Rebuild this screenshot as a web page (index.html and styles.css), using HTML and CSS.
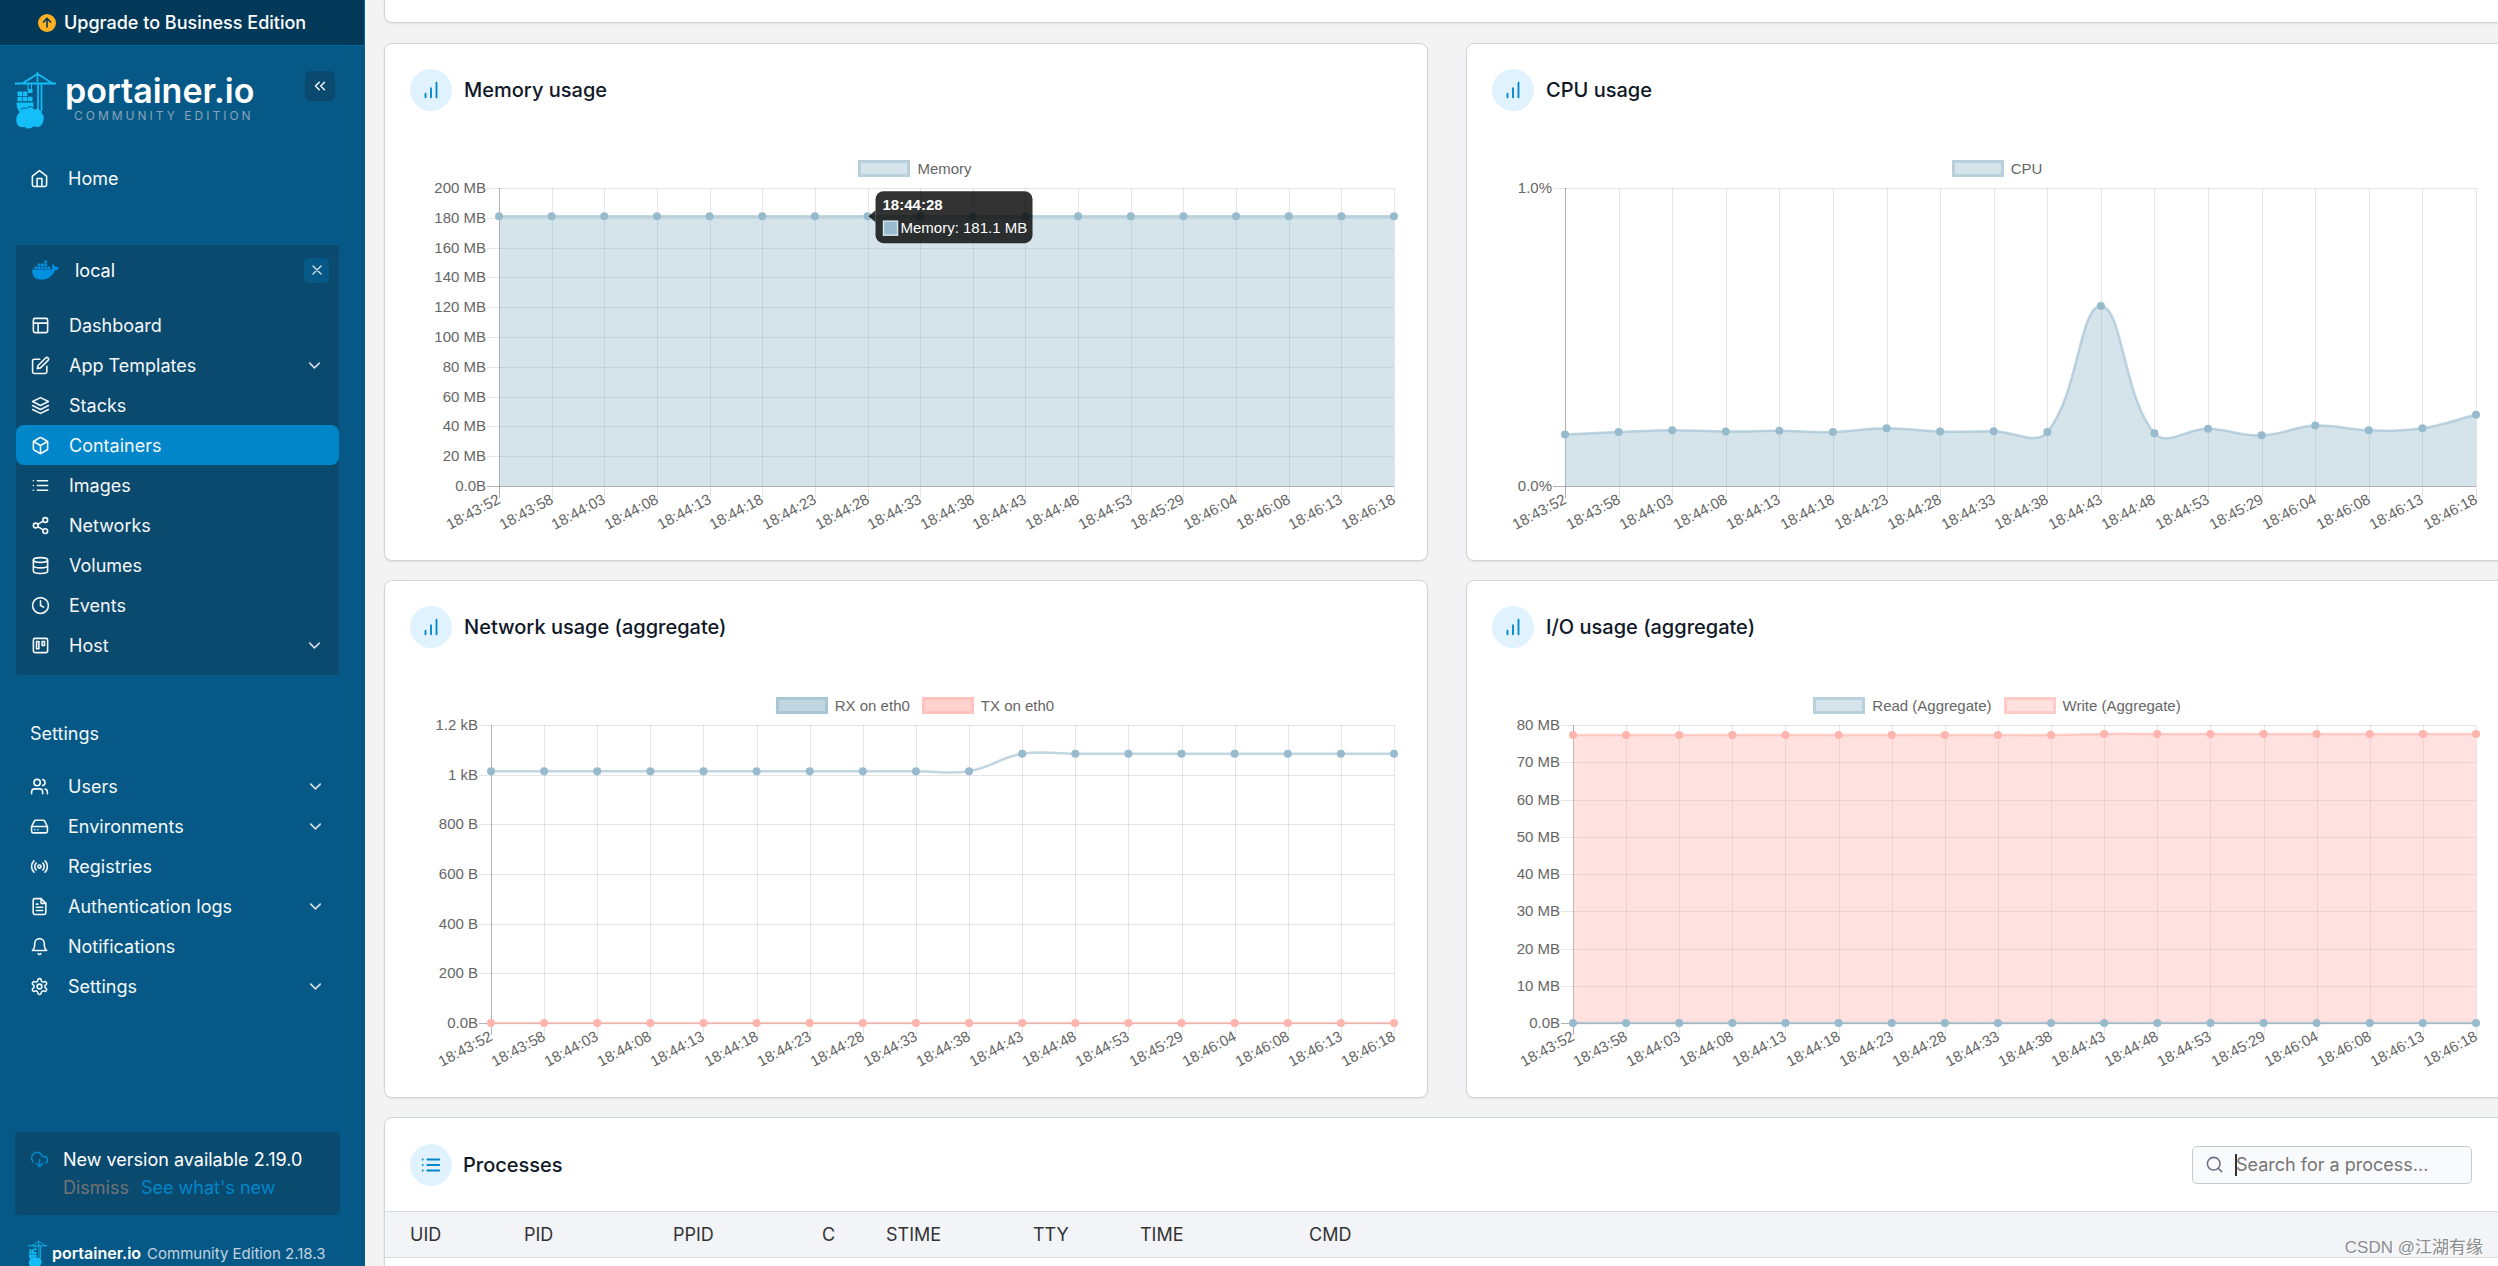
FILE: index.html
```html
<!DOCTYPE html>
<html lang="en">
<head>
<meta charset="utf-8">
<title>Portainer | Container statistics</title>
<meta name="viewport" content="width=device-width, initial-scale=1">
<link rel="stylesheet" href="styles.css">
<script src="charts.js" defer></script>
</head>
<body>
<svg class="sprite" aria-hidden="true">
  <symbol id="crane" viewBox="0 0 42 60">
    <g fill="none" stroke="#13bef9">
      <path d="M22.500 1v10.500M8 12 22.500 3 37 12" stroke-width="1.600"/>
      <path d="M0 12.500h41" stroke-width="2"/>
      <path d="M23 12v28M26.500 12v28" stroke-width="1.700"/>
      <path d="M13 12v7M16.500 12v7" stroke-width="1"/>
    </g>
    <g fill="#13bef9">
      <path d="M13 18h4.500v4H13zM2.500 20.500h4.500v4.500H2.500zM7.800 20.500h4.500v4.500H7.800zM2.500 25.800h4.500v4.500H2.500zM7.800 25.800h4.500v4.500H7.800zM13 25.800h4.500v4.500H13z"/>
      <path d="M1.500 31.500h17v8l-12 3c-3-2-5-6-5-11z"/>
      <path d="M6.500 39.500c2-1.500 4-1 5-.500 1.500-2 5-2.500 7-.500 4-1.500 8 0 8.500 4 2 2 2.500 5 1 8-.500 3.500-3 5.500-6.500 5.500-1 0-2-.200-3-.700-2 2.500-6 3.200-8.500.700-5 .800-8.500-1.500-8.500-5.500-1-4 1.500-8.500 5-11z"/>
    </g>
    <path d="M6 38.500c2-2 4.500-1.500 5.500-1 1.500-2 5-2.500 7-.500" fill="none" stroke="#065986" stroke-width="1"/>
  </symbol>
  <symbol id="chevron" viewBox="0 0 24 24"><path d="m6 9 6 6 6-6"/></symbol>
  <symbol id="bars" viewBox="0 0 24 24"><path d="M6 20v-4M12 20V10M18 20V4"/></symbol>
  <symbol id="list" viewBox="0 0 24 24"><path d="M8 6h13M8 12h13M8 18h13M3 6h.01M3 12h.01M3 18h.01"/></symbol>
</svg>

<aside class="sidebar">
  <button class="upgrade" type="button">
    <svg viewBox="0 0 18 18" width="18" height="18" aria-hidden="true"><circle cx="9" cy="9" r="9" fill="#fdb022"/><path d="M9 13.500V5M5 8.500 9 4.500l4 4" fill="none" stroke="#023959" stroke-width="1.600"/></svg>
    Upgrade to Business Edition
  </button>

  <div class="brand">
    <a class="brand-link" href="#home">
      <svg width="42" height="60" aria-hidden="true"><use href="#crane"/></svg>
      <span class="brand-text">
        <span class="wordmark">portainer.io</span>
        <span class="edition">COMMUNITY EDITION</span>
      </span>
    </a>
    <button class="collapse" type="button" aria-label="Collapse sidebar">
      <svg class="icon" viewBox="0 0 24 24"><path d="m11 17-5-5 5-5M18 17l-5-5 5-5"/></svg>
    </button>
  </div>

  <nav class="nav">
    <ul class="menu">
      <li><a class="item" href="#home"><svg class="icon" viewBox="0 0 24 24"><path d="m3 9 9-7 9 7v11a2 2 0 0 1-2 2H5a2 2 0 0 1-2-2z"/><path d="M9 22V12h6v10"/></svg>Home</a></li>
    </ul>

    <section class="environment">
      <header class="env-head">
        <svg class="whale" viewBox="0 3 24 18" aria-hidden="true"><path fill="#0091e2" d="M13.983 11.078h2.119a.186.186 0 00.186-.185V9.006a.186.186 0 00-.186-.186h-2.119a.185.185 0 00-.185.185v1.888c0 .102.083.185.185.185m-2.954-5.43h2.118a.186.186 0 00.186-.186V3.574a.186.186 0 00-.186-.185h-2.118a.185.185 0 00-.185.185v1.888c0 .102.082.185.185.185m0 2.716h2.118a.187.187 0 00.186-.186V6.29a.186.186 0 00-.186-.185h-2.118a.185.185 0 00-.185.185v1.887c0 .102.082.185.185.186m-2.93 0h2.12a.186.186 0 00.184-.186V6.29a.185.185 0 00-.185-.185H8.1a.185.185 0 00-.185.185v1.887c0 .102.083.185.185.186m-2.964 0h2.119a.186.186 0 00.185-.186V6.29a.185.185 0 00-.185-.185H5.136a.186.186 0 00-.186.185v1.887c0 .102.084.185.186.186m5.893 2.715h2.118a.186.186 0 00.186-.185V9.006a.186.186 0 00-.186-.186h-2.118a.185.185 0 00-.185.185v1.888c0 .102.082.185.185.185m-2.93 0h2.12a.185.185 0 00.184-.185V9.006a.185.185 0 00-.184-.186h-2.12a.185.185 0 00-.184.185v1.888c0 .102.083.185.185.185m-2.964 0h2.119a.185.185 0 00.185-.185V9.006a.185.185 0 00-.184-.186h-2.12a.186.186 0 00-.186.186v1.887c0 .102.084.185.186.185m-2.92 0h2.12a.185.185 0 00.184-.185V9.006a.185.185 0 00-.184-.186h-2.12a.185.185 0 00-.184.185v1.888c0 .102.082.185.185.185M23.763 9.89c-.065-.051-.672-.51-1.954-.51-.338.001-.676.03-1.01.087-.248-1.7-1.653-2.53-1.716-2.566l-.344-.199-.226.327c-.284.438-.49.922-.612 1.43-.23.97-.09 1.882.403 2.661-.595.332-1.55.413-1.744.42H.751a.751.751 0 00-.75.748 11.376 11.376 0 00.692 4.062c.545 1.428 1.355 2.48 2.41 3.124 1.18.723 3.1 1.137 5.275 1.137.983.003 1.963-.086 2.93-.266a12.248 12.248 0 003.823-1.389c.98-.567 1.86-1.288 2.61-2.136 1.252-1.418 1.998-2.997 2.553-4.4h.221c1.372 0 2.215-.549 2.68-1.009.309-.293.55-.65.707-1.046l.098-.288Z"/></svg>
        <span class="env-name">local</span>
        <button class="env-close" type="button" aria-label="Close environment"><svg class="icon" viewBox="0 0 24 24"><path d="M18 6 6 18M6 6l12 12"/></svg></button>
      </header>
      <ul class="menu">
        <li><a class="item" href="#dashboard"><svg class="icon" viewBox="0 0 24 24"><rect x="3" y="3" width="18" height="18" rx="2"/><path d="M3 9h18M9 21V9"/></svg>Dashboard</a></li>
        <li><a class="item" href="#templates"><svg class="icon" viewBox="0 0 24 24"><path d="M11 4H4a2 2 0 0 0-2 2v14a2 2 0 0 0 2 2h14a2 2 0 0 0 2-2v-7"/><path d="M18.500 2.500a2.120 2.120 0 0 1 3 3L12 15l-4 1 1-4z"/></svg>App Templates<svg class="icon more"><use href="#chevron"/></svg></a></li>
        <li><a class="item" href="#stacks"><svg class="icon" viewBox="0 0 24 24"><path d="m12 2 10 5-10 5L2 7zM2 17l10 5 10-5M2 12l10 5 10-5"/></svg>Stacks</a></li>
        <li><a class="item active" href="#containers" aria-current="page"><svg class="icon" viewBox="0 0 24 24"><path d="M21 16V8a2 2 0 0 0-1-1.730l-7-4a2 2 0 0 0-2 0l-7 4A2 2 0 0 0 3 8v8a2 2 0 0 0 1 1.730l7 4a2 2 0 0 0 2 0l7-4A2 2 0 0 0 21 16z"/><path d="M3.270 6.960 12 12.010l8.730-5.050M12 22.080V12"/></svg>Containers</a></li>
        <li><a class="item" href="#images"><svg class="icon"><use href="#list"/></svg>Images</a></li>
        <li><a class="item" href="#networks"><svg class="icon" viewBox="0 0 24 24"><circle cx="18" cy="5" r="3"/><circle cx="6" cy="12" r="3"/><circle cx="18" cy="19" r="3"/><path d="m8.600 13.500 6.800 4M15.400 6.500l-6.800 4"/></svg>Networks</a></li>
        <li><a class="item" href="#volumes"><svg class="icon" viewBox="0 0 24 24"><ellipse cx="12" cy="5" rx="9" ry="3"/><path d="M21 12c0 1.660-4 3-9 3s-9-1.340-9-3M3 5v14c0 1.660 4 3 9 3s9-1.340 9-3V5"/></svg>Volumes</a></li>
        <li><a class="item" href="#events"><svg class="icon" viewBox="0 0 24 24"><circle cx="12" cy="12" r="10"/><path d="M12 6v6l4 2"/></svg>Events</a></li>
        <li><a class="item" href="#host"><svg class="icon" viewBox="0 0 24 24"><rect x="3" y="3" width="18" height="18" rx="2"/><path d="M7 7h3v9H7zM14 7h3v5h-3z"/></svg>Host<svg class="icon more"><use href="#chevron"/></svg></a></li>
      </ul>
    </section>

    <h2 class="nav-title">Settings</h2>
    <ul class="menu">
      <li><a class="item" href="#users"><svg class="icon" viewBox="0 0 24 24"><path d="M16 21v-2a4 4 0 0 0-4-4H6a4 4 0 0 0-4 4v2"/><circle cx="9" cy="7" r="4"/><path d="M22 21v-2a4 4 0 0 0-3-3.870M16 3.130a4 4 0 0 1 0 7.750"/></svg>Users<svg class="icon more"><use href="#chevron"/></svg></a></li>
      <li><a class="item" href="#environments"><svg class="icon" viewBox="0 0 24 24"><path d="M22 12H2M5.450 5.110 2 12v6a2 2 0 0 0 2 2h16a2 2 0 0 0 2-2v-6l-3.450-6.890A2 2 0 0 0 16.760 4H7.240a2 2 0 0 0-1.790 1.110zM6 16h.01M10 16h.01"/></svg>Environments<svg class="icon more"><use href="#chevron"/></svg></a></li>
      <li><a class="item" href="#registries"><svg class="icon" viewBox="0 0 24 24"><circle cx="12" cy="12" r="2"/><path d="M4.930 19.070a10 10 0 0 1 0-14.140M7.760 16.240a6 6 0 0 1 0-8.490M16.240 7.760a6 6 0 0 1 0 8.490M19.070 4.930a10 10 0 0 1 0 14.140"/></svg>Registries</a></li>
      <li><a class="item" href="#auth-logs"><svg class="icon" viewBox="0 0 24 24"><path d="M14 2H6a2 2 0 0 0-2 2v16a2 2 0 0 0 2 2h12a2 2 0 0 0 2-2V8z"/><path d="M14 2v6h6M16 13H8M16 17H8M10 9H8"/></svg>Authentication logs<svg class="icon more"><use href="#chevron"/></svg></a></li>
      <li><a class="item" href="#notifications"><svg class="icon" viewBox="0 0 24 24"><path d="M6 8a6 6 0 0 1 12 0c0 7 3 9 3 9H3s3-2 3-9M10.300 21a1.940 1.940 0 0 0 3.400 0"/></svg>Notifications</a></li>
      <li><a class="item" href="#settings"><svg class="icon" viewBox="0 0 24 24"><path d="M12.220 2h-.440a2 2 0 0 0-2 2v.180a2 2 0 0 1-1 1.730l-.430.250a2 2 0 0 1-2 0l-.150-.080a2 2 0 0 0-2.730.730l-.220.380a2 2 0 0 0 .730 2.730l.150.100a2 2 0 0 1 1 1.720v.510a2 2 0 0 1-1 1.740l-.150.090a2 2 0 0 0-.730 2.730l.220.380a2 2 0 0 0 2.730.730l.150-.080a2 2 0 0 1 2 0l.430.250a2 2 0 0 1 1 1.730V20a2 2 0 0 0 2 2h.440a2 2 0 0 0 2-2v-.180a2 2 0 0 1 1-1.730l.430-.250a2 2 0 0 1 2 0l.150.080a2 2 0 0 0 2.730-.730l.220-.390a2 2 0 0 0-.730-2.730l-.150-.080a2 2 0 0 1-1-1.740v-.500a2 2 0 0 1 1-1.740l.150-.090a2 2 0 0 0 .730-2.730l-.220-.380a2 2 0 0 0-2.730-.730l-.150.080a2 2 0 0 1-2 0l-.430-.250a2 2 0 0 1-1-1.730V4a2 2 0 0 0-2-2z"/><circle cx="12" cy="12" r="3"/></svg>Settings<svg class="icon more"><use href="#chevron"/></svg></a></li>
    </ul>
  </nav>

  <section class="notice">
    <svg class="icon notice-icon" viewBox="0 0 24 24"><path d="M4 14.900A7 7 0 1 1 15.710 8h1.790a4.500 4.500 0 0 1 2.500 8.240M12 12v9M8 17l4 4 4-4"/></svg>
    <div>
      <p class="notice-text">New version available 2.19.0</p>
      <p class="notice-actions"><button class="dismiss" type="button">Dismiss</button><a class="whats-new" href="#release">See what's new</a></p>
    </div>
  </section>

  <footer class="sidebar-foot">
    <svg width="20" height="28" aria-hidden="true"><use href="#crane"/></svg>
    <span class="foot-mark">portainer.io</span>
    <span>Community Edition 2.18.3</span>
  </footer>
</aside>

<main class="content">
  <section class="card card-above"></section>

  <div class="charts">
    <section class="card">
      <header class="card-head"><span class="badge"><svg class="icon"><use href="#bars"/></svg></span><h2 class="title">Memory usage</h2></header>
      <ul class="legend"><li class="key"><span class="swatch blue-light"></span>Memory</li></ul>
      <div class="plot" data-chart="memory"></div>
    </section>
    <section class="card">
      <header class="card-head"><span class="badge"><svg class="icon"><use href="#bars"/></svg></span><h2 class="title">CPU usage</h2></header>
      <ul class="legend"><li class="key"><span class="swatch blue-light"></span>CPU</li></ul>
      <div class="plot" data-chart="cpu"></div>
    </section>
    <section class="card">
      <header class="card-head"><span class="badge"><svg class="icon"><use href="#bars"/></svg></span><h2 class="title">Network usage (aggregate)</h2></header>
      <ul class="legend"><li class="key"><span class="swatch blue"></span>RX on eth0</li><li class="key"><span class="swatch red"></span>TX on eth0</li></ul>
      <div class="plot" data-chart="network"></div>
    </section>
    <section class="card">
      <header class="card-head"><span class="badge"><svg class="icon"><use href="#bars"/></svg></span><h2 class="title">I/O usage (aggregate)</h2></header>
      <ul class="legend"><li class="key"><span class="swatch blue-light"></span>Read (Aggregate)</li><li class="key"><span class="swatch red-light"></span>Write (Aggregate)</li></ul>
      <div class="plot" data-chart="io"></div>
    </section>
  </div>

  <section class="card processes">
    <header class="table-head">
      <span class="badge"><svg class="icon"><use href="#list"/></svg></span>
      <h2 class="title">Processes</h2>
      <label class="search">
        <svg class="icon search-icon" viewBox="0 0 24 24"><circle cx="11" cy="11" r="8"/><path d="m21 21-4.300-4.300"/></svg>
        <span class="caret"></span>
        <input class="search-input" type="text" placeholder="Search for a process..." aria-label="Search for a process">
      </label>
    </header>
    <table class="table">
      <thead>
        <tr><th class="c-uid">UID</th><th class="c-pid">PID</th><th class="c-pid">PPID</th><th class="c-c">C</th><th class="c-stime">STIME</th><th class="c-tty">TTY</th><th class="c-time">TIME</th><th>CMD</th></tr>
      </thead>
      <tbody><tr><td colspan="8"></td></tr></tbody>
    </table>
  </section>
</main>
<div class="watermark">CSDN @江湖有缘</div>
</body>
</html>
```
FILE: styles.css
```css
* { box-sizing: border-box; }

html, body { height: 100%; }

body {
  margin: 0;
  display: flex;
  overflow: hidden;
  background: #f3f3f3;
  color: #101828;
  font-family: Inter, "Liberation Sans", sans-serif;
  font-size: 18px;
}

ul { margin: 0; padding: 0; list-style: none; }
h2, p { margin: 0; font-weight: 400; font-size: inherit; }
button { border: 0; padding: 0; font: inherit; color: inherit; cursor: pointer; }
a { color: inherit; text-decoration: none; }

.sprite { position: absolute; width: 0; height: 0; }

.icon {
  width: 19px;
  height: 19px;
  flex: none;
  fill: none;
  stroke: currentColor;
  stroke-width: 2;
  stroke-linecap: round;
  stroke-linejoin: round;
}

/* Sidebar */
.sidebar {
  width: 365px;
  height: 100vh;
  flex: none;
  display: flex;
  flex-direction: column;
  overflow: hidden;
  background: #065986;
  color: #f5f8fa;
}

.upgrade {
  flex: none;
  height: 46px;
  display: flex;
  align-items: center;
  gap: 8px;
  padding-left: 38px;
  background: #023959;
  border-right: 1px solid #026aa2;
  border-bottom: 1px solid #026aa2;
  font-weight: 500;
  color: #fff;
}

.brand {
  display: flex;
  justify-content: space-between;
  align-items: flex-start;
  padding: 25px 30px 0 15px;
}

.brand-link { display: flex; gap: 8px; }
.brand-text { display: flex; flex-direction: column; }
.wordmark { font-size: 34px; font-weight: 600; line-height: 40px; color: #fff; }
.edition { padding-left: 9px; font-size: 12px; line-height: 10px; letter-spacing: 3px; color: #8aa3ba; }

.collapse {
  width: 30px;
  height: 30px;
  display: grid;
  place-items: center;
  border-radius: 5px;
  background: #0b4a6f;
}

.nav { flex: 1; min-height: 0; padding: 27px 25px 0 15px; }

.item {
  display: flex;
  align-items: center;
  gap: 19px;
  height: 40px;
  padding: 0 15px;
  border-radius: 8px;
}
.item.active { background: #0086c9; }
.more { margin-left: auto; color: #d5dfe8; }

.environment {
  margin-top: 46px;
  padding-bottom: 10px;
  border: 1px dotted #0c6a9c;
  border-radius: 5px;
  background: #0b4a6f;
}

.env-head { display: flex; align-items: center; height: 50px; margin-bottom: 10px; padding: 0 10px 0 16px; }
.whale { width: 27px; height: 20px; }
.env-name { flex: 1; padding-left: 16px; color: #fff; }
.env-close {
  width: 25px;
  height: 25px;
  display: grid;
  place-items: center;
  border-radius: 5px;
  background: #065986;
}
.collapse .icon { width: 18px; height: 18px; }
.env-close .icon { width: 16px; height: 16px; color: #d5dfe8; }

.nav-title { padding: 46px 0 20px 15px; line-height: 24px; }

.notice {
  flex: none;
  display: flex;
  gap: 14px;
  margin: 0 25px 0 15px;
  padding: 14px 15px 13px;
  border-radius: 5px;
  background: #0b4a6f;
  line-height: 28px;
}
.notice-icon { margin-top: 4px; color: #0086c9; }
.notice-text { color: #fff; }
.notice-actions { display: flex; gap: 12px; }
.dismiss { background: none; color: #737373; }
.whats-new { color: #0086c9; }

.sidebar-foot {
  flex: none;
  height: 51px;
  display: flex;
  align-items: flex-start;
  padding: 25px 0 0 28px;
  font-size: 15px;
  line-height: 28px;
  color: #c3d3e0;
}
.sidebar-foot svg { flex: none; margin-right: 4px; }
.foot-mark { margin-right: 6px; font-size: 16px; font-weight: 600; color: #fff; line-height: 26px; }

/* Content, which runs a little past the window's right edge */
.content {
  flex: 1;
  min-width: 0;
  display: flex;
  flex-direction: column;
  gap: 20px;
  margin: 0 -12px 0 19px;
}

.card {
  border: 1px solid #d0d5dd;
  border-radius: 8px;
  background: #fff;
  box-shadow: 0 1px 2px rgba(16, 24, 40, 0.08);
}
.card-above { flex: none; height: 23px; border-top: 0; border-radius: 0 0 8px 8px; }

.charts { display: grid; grid-template-columns: 1fr 1fr; gap: 19px 38px; }

.card-head { display: flex; align-items: center; gap: 12px; padding: 25px 25px 0; }
.badge {
  width: 42px;
  height: 42px;
  display: grid;
  place-items: center;
  border-radius: 50%;
  background: #e0f2fe;
  color: #0086c9;
}
.badge .icon { width: 22px; height: 22px; }
.title { font-size: 20px; font-weight: 500; }

.legend {
  display: flex;
  justify-content: center;
  gap: 12px;
  padding: 49px 0 0 18px;
  font: 15px/17px "Liberation Sans", Arial, sans-serif;
  color: #666;
}
.key { display: flex; gap: 7px; }
.swatch { width: 52px; height: 17px; border: 3px solid #b7d0dc; }
.blue-light { background: #d5e3ea; }
.blue { background: #c1d6e1; border-color: #a9c6d5; }
.red { background: #ffd2ce; border-color: #ffc2bd; }
.red-light { background: #ffe1df; border-color: #ffcbc7; }

.plot { height: 383px; }
.plot svg { display: block; width: 100%; height: 100%; font: 15px "Liberation Sans", Arial, sans-serif; fill: #666; }
.tip-title { font-weight: 700; fill: #fff; }
.tip-text { fill: #fff; }

/* Processes */
.processes { margin-top: -1px; }
.table-head { display: flex; align-items: center; gap: 11px; height: 93px; padding: 0 37px 0 25px; }
.search {
  position: relative;
  display: flex;
  align-items: center;
  gap: 12px;
  width: 280px;
  height: 38px;
  margin-left: auto;
  padding: 0 12px;
  border: 1px solid #c8c9cc;
  border-radius: 5px;
  background: #f9fafb;
}
.search-icon { color: #667085; }
.search-input { flex: 1; min-width: 0; padding: 0; border: 0; outline: 0; background: none; font: inherit; }
.search-input::placeholder { color: #757575; }
.caret { position: absolute; left: 42px; top: 7px; width: 2px; height: 22px; background: #333; }

.table { width: 100%; table-layout: fixed; border-collapse: collapse; }
.table th {
  height: 46px;
  padding: 0;
  border: solid #d9dbe0;
  border-width: 1px 0;
  background: #f2f4f7;
  color: #333;
  font-weight: 400;
  text-align: left;
}
.table td { height: 46px; }
.table .c-uid { width: 139px; padding-left: 25px; }
.c-pid { width: 149px; }
.c-c { width: 64px; }
.c-stime { width: 147px; }
.c-tty { width: 107px; }
.c-time { width: 169px; }

.watermark {
  position: absolute;
  right: 15px;
  bottom: 6px;
  font: 17px/24px "Liberation Sans", "Noto Sans CJK SC", sans-serif;
  color: #8c8c8c;
  text-shadow: 1px 1px 0 #fff;
}
```
FILE: charts.js
```js
const TIMES = [
  "18:43:52", "18:43:58", "18:44:03", "18:44:08", "18:44:13", "18:44:18",
  "18:44:23", "18:44:28", "18:44:33", "18:44:38", "18:44:43", "18:44:48",
  "18:44:53", "18:45:29", "18:46:04", "18:46:08", "18:46:13", "18:46:18",
];

const fill = (n, v) => Array(n).fill(v);
const BLUE = "151,187,205";
const RED = "255,180,174";

const CHARTS = {
  memory: {
    left: 114,
    ticks: ["0.0B", "20 MB", "40 MB", "60 MB", "80 MB", "100 MB", "120 MB", "140 MB", "160 MB", "180 MB", "200 MB"],
    max: 200,
    series: [{ color: BLUE, area: true, data: fill(18, 181.1) }],
    tip: { index: 7, text: "Memory: 181.1 MB" },
  },
  cpu: {
    left: 98,
    ticks: ["0.0%", "1.0%"],
    max: 1,
    series: [{
      color: BLUE,
      area: true,
      data: [0.173, 0.181, 0.187, 0.183, 0.185, 0.181, 0.194, 0.183, 0.184, 0.181, 0.604, 0.177, 0.192, 0.17, 0.203, 0.187, 0.194, 0.239],
    }],
  },
  network: {
    left: 106,
    ticks: ["0.0B", "200 B", "400 B", "600 B", "800 B", "1 kB", "1.2 kB"],
    max: 1200,
    series: [
      { color: BLUE, data: [...fill(10, 1014), ...fill(8, 1084)] },
      { color: RED, data: fill(18, 0) },
    ],
  },
  io: {
    left: 106,
    ticks: ["0.0B", "10 MB", "20 MB", "30 MB", "40 MB", "50 MB", "60 MB", "70 MB", "80 MB"],
    max: 80,
    series: [
      { color: RED, area: true, data: [...fill(10, 77.3), ...fill(8, 77.6)] },
      { color: BLUE, area: true, data: fill(18, 0) },
    ],
  },
};

const TOP = 11;
const HEIGHT = 298;
const RIGHT = 33;
const TICK = 12;
const TENSION = 0.4;

// Spline control points, weighted by the distance to each neighbour.
function controls(points, i, bottom) {
  const cur = points[i];
  const prev = points[i - 1] || cur;
  const next = points[i + 1] || cur;
  const d1 = Math.hypot(cur.x - prev.x, cur.y - prev.y);
  const d2 = Math.hypot(next.x - cur.x, next.y - cur.y);
  const a = TENSION * d1 / (d1 + d2);
  const b = TENSION * d2 / (d1 + d2);
  const cap = (y) => Math.min(Math.max(y, TOP), bottom);
  return {
    inX: cur.x - a * (next.x - prev.x), inY: cap(cur.y - a * (next.y - prev.y)),
    outX: cur.x + b * (next.x - prev.x), outY: cap(cur.y + b * (next.y - prev.y)),
  };
}

function curve(points, bottom) {
  const c = points.map((_, i) => controls(points, i, bottom));
  return points.map((p, i) => i === 0
    ? `M${p.x} ${p.y}`
    : `C${c[i - 1].outX} ${c[i - 1].outY} ${c[i].inX} ${c[i].inY} ${p.x} ${p.y}`).join("");
}

function tooltip(p, tip) {
  const x = p.x + 8;
  const y = p.y - 25;
  return `<path d="M${p.x + 1} ${p.y}l7 -6v12z" fill="rgba(0,0,0,.8)"/>
    <rect x="${x}" y="${y}" width="157" height="52" rx="8" fill="rgba(0,0,0,.8)"/>
    <text class="tip-title" x="${x + 7}" y="${y + 19}">${TIMES[tip.index]}</text>
    <rect x="${x + 8}" y="${y + 30}" width="14" height="14" fill="#97bbcd" stroke="#d5e3ea" stroke-width="1.5"/>
    <text class="tip-text" x="${x + 25}" y="${y + 42}">${tip.text}</text>`;
}

function draw(host) {
  const chart = CHARTS[host.dataset.chart];
  const width = host.clientWidth;
  const left = chart.left;
  const right = width - RIGHT;
  const bottom = TOP + HEIGHT;
  const step = (right - left) / (TIMES.length - 1);
  let out = "";

  chart.ticks.forEach((label, i) => {
    const y = Math.round(bottom - HEIGHT * i / (chart.ticks.length - 1)) + 0.5;
    const tone = i === 0 ? "rgba(0,0,0,.3)" : "rgba(0,0,0,.1)";
    out += `<path d="M${left - TICK} ${y}H${right}" stroke="${tone}"/>
      <text x="${left - TICK - 1}" y="${y + 4}" text-anchor="end">${label}</text>`;
  });

  TIMES.forEach((label, i) => {
    const x = Math.round(left + step * i) + 0.5;
    const tone = i === 0 ? "rgba(0,0,0,.3)" : "rgba(0,0,0,.1)";
    out += `<path d="M${x} ${TOP}V${bottom + TICK}" stroke="${tone}"/>
      <text transform="translate(${x} ${bottom + TICK + 1}) rotate(-28)" y="4" text-anchor="end">${label}</text>`;
  });

  let first;
  chart.series.forEach((s) => {
    const points = s.data.map((v, i) => ({ x: left + step * i, y: bottom - HEIGHT * v / chart.max }));
    first = first || points;
    const line = curve(points, bottom);
    if (s.area) out += `<path d="${line}V${bottom}H${left}z" fill="rgba(${s.color},.4)"/>`;
    out += `<path d="${line}" fill="none" stroke="rgba(${s.color},.6)" stroke-width="2.5"/>`;
    out += points.map((p) => `<circle cx="${p.x}" cy="${p.y}" r="4" fill="rgb(${s.color})"/>`).join("");
  });

  if (chart.tip) out += tooltip(first[chart.tip.index], chart.tip);
  host.innerHTML = `<svg role="img">${out}</svg>`;
}

const drawAll = () => document.querySelectorAll(".plot").forEach(draw);
drawAll();
window.addEventListener("resize", drawAll);
```
